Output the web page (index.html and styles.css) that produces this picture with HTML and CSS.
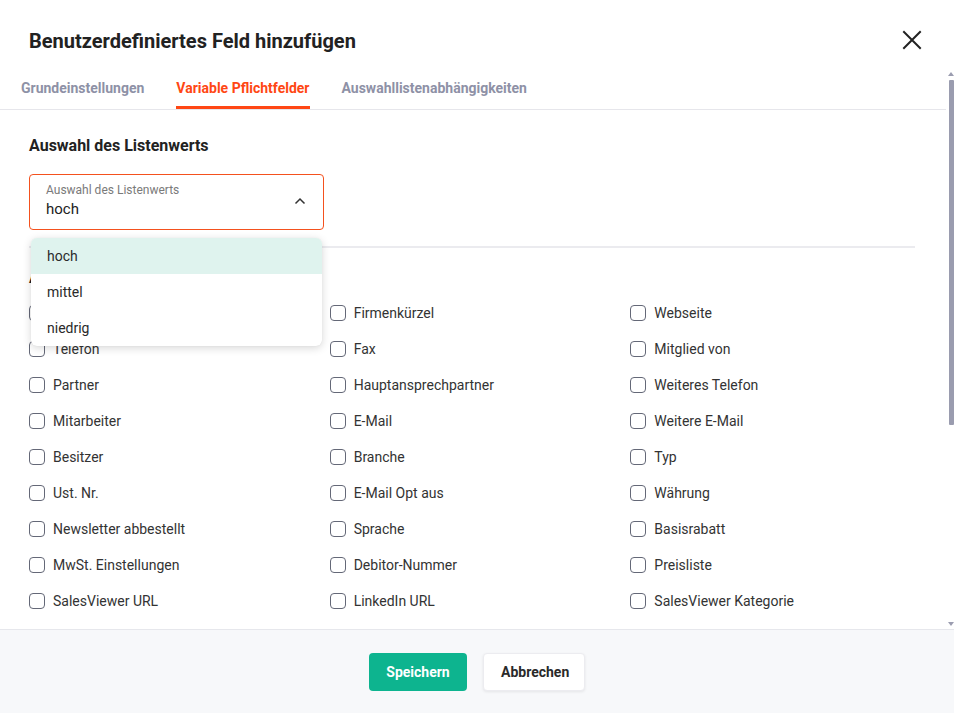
FILE: index.html
```html
<!DOCTYPE html>
<html lang="de">
<head>
<meta charset="utf-8">
<title>Benutzerdefiniertes Feld hinzufügen</title>
<link rel="stylesheet" href="styles.css">
</head>
<body>
<div class="modal">
  <header class="modal-header">
    <h1 class="modal-title">Benutzerdefiniertes Feld hinzufügen</h1>
    <button class="close-btn" aria-label="Schließen">
      <svg width="20" height="20" viewBox="0 0 20 20"><path d="M2 2 L18 18 M18 2 L2 18" stroke="#222" stroke-width="2" stroke-linecap="square" fill="none"/></svg>
    </button>
  </header>
  <div class="modal-body">
    <nav class="tabs">
      <span class="tab">Grundeinstellungen</span>
      <span class="tab active">Variable Pflichtfelder</span>
      <span class="tab">Auswahllistenabhängigkeiten</span>
    </nav>
    <div class="content">
      <h2 class="section-title">Auswahl des Listenwerts</h2>
      <div class="select-wrap">
        <div class="select">
          <div class="select-text">
            <span class="select-label">Auswahl des Listenwerts</span>
            <span class="select-value">hoch</span>
          </div>
          <svg class="chevron" width="12" height="8" viewBox="0 0 12 8"><path d="M1.5 6.5 L6 2 L10.5 6.5" stroke="#333" stroke-width="1.5" fill="none"/></svg>
        </div>
        <ul class="dropdown">
          <li class="option selected">hoch</li>
          <li class="option">mittel</li>
          <li class="option">niedrig</li>
        </ul>
      </div>
      <hr class="divider">
      <h2 class="section-title second">Auswahl der Pflichtfelder</h2>
      <div class="grid">
        <label class="cb"><span class="box"></span>Firmenname</label>
        <label class="cb"><span class="box"></span>Firmenkürzel</label>
        <label class="cb"><span class="box"></span>Webseite</label>
        <label class="cb"><span class="box"></span>Telefon</label>
        <label class="cb"><span class="box"></span>Fax</label>
        <label class="cb"><span class="box"></span>Mitglied von</label>
        <label class="cb"><span class="box"></span>Partner</label>
        <label class="cb"><span class="box"></span>Hauptansprechpartner</label>
        <label class="cb"><span class="box"></span>Weiteres Telefon</label>
        <label class="cb"><span class="box"></span>Mitarbeiter</label>
        <label class="cb"><span class="box"></span>E-Mail</label>
        <label class="cb"><span class="box"></span>Weitere E-Mail</label>
        <label class="cb"><span class="box"></span>Besitzer</label>
        <label class="cb"><span class="box"></span>Branche</label>
        <label class="cb"><span class="box"></span>Typ</label>
        <label class="cb"><span class="box"></span>Ust. Nr.</label>
        <label class="cb"><span class="box"></span>E-Mail Opt aus</label>
        <label class="cb"><span class="box"></span>Währung</label>
        <label class="cb"><span class="box"></span>Newsletter abbestellt</label>
        <label class="cb"><span class="box"></span>Sprache</label>
        <label class="cb"><span class="box"></span>Basisrabatt</label>
        <label class="cb"><span class="box"></span>MwSt. Einstellungen</label>
        <label class="cb"><span class="box"></span>Debitor-Nummer</label>
        <label class="cb"><span class="box"></span>Preisliste</label>
        <label class="cb"><span class="box"></span>SalesViewer URL</label>
        <label class="cb"><span class="box"></span>LinkedIn URL</label>
        <label class="cb"><span class="box"></span>SalesViewer Kategorie</label>
      </div>
    </div>
    <div class="scrollbar">
      <span class="arrow up"></span>
      <span class="thumb"></span>
      <span class="track-rest"></span>
      <span class="arrow down"></span>
    </div>
  </div>
  <footer class="modal-footer">
    <button class="btn btn-primary">Speichern</button>
    <button class="btn btn-secondary">Abbrechen</button>
  </footer>
</div>
</body>
</html>
```
FILE: styles.css
```css
* { box-sizing: border-box; }
html, body { margin: 0; padding: 0; }
body {
  font-family: Roboto, "Noto Sans", "Liberation Sans", sans-serif;
  background: #fff;
  color: #222;
}
.modal {
  width: 954px;
  height: 713px;
  display: flex;
  flex-direction: column;
  overflow: hidden;
}
.modal-header {
  height: 70px;
  flex: none;
  padding: 12px 32px 0 29px;
  display: flex;
  align-items: center;
  justify-content: space-between;
}
.modal-title {
  margin: 0;
  font-size: 20px;
  font-weight: 700;
  color: #222;
}
.close-btn {
  border: 0;
  background: none;
  padding: 0;
  width: 20px;
  height: 20px;
  display: flex;
  margin-top: -2px;
}
.modal-body {
  flex: 1;
  position: relative;
  overflow: hidden;
}
.tabs {
  display: flex;
  gap: 32px;
  padding-left: 21px;
  margin-right: 8px;
  height: 40px;
  border-bottom: 1px solid #e6e6eb;
}
.tab {
  font-size: 14px;
  font-weight: 700;
  color: #8e91a6;
  padding-top: 10px;
  border-bottom: 3px solid transparent;
  height: 39px;
}
.tab.active {
  color: #ff4714;
  border-bottom-color: #ff4714;
}
.content {
  padding: 26px 39px 0 29px;
}
.section-title {
  margin: 0;
  font-size: 16px;
  line-height: 20px;
  font-weight: 700;
  color: #222;
}
.section-title.second {
  margin: 20px 0 7px;
}
.select-wrap {
  position: relative;
  width: 295px;
  margin-top: 18px;
}
.select {
  height: 56px;
  border: 1px solid #f4511e;
  border-radius: 4px;
  padding: 0 17px 0 16px;
  display: flex;
  align-items: center;
  justify-content: space-between;
}
.select-text {
  display: flex;
  flex-direction: column;
  margin-top: -3px;
}
.select-label {
  font-size: 12px;
  line-height: 14px;
  color: #7a7a7a;
}
.select-value {
  font-size: 15px;
  line-height: 20px;
  color: #222;
  margin-top: 2px;
}
.chevron { margin-top: -2px; }
.dropdown {
  position: absolute;
  left: 2px;
  top: 64px;
  width: 291px;
  margin: 0;
  padding: 0;
  list-style: none;
  background: #fff;
  border-radius: 6px;
  box-shadow: 0 2px 8px rgba(0, 0, 0, 0.16), 0 0 1px rgba(0, 0, 0, 0.1);
  overflow: hidden;
  z-index: 5;
}
.option {
  height: 36px;
  line-height: 36px;
  padding-left: 16px;
  font-size: 14px;
  color: #2a2a2a;
}
.option.selected { background: #dff3ee; }
.divider {
  margin: 16px 0 0;
  border: 0;
  border-top: 2px solid #ebebef;
}
.grid {
  display: grid;
  grid-template-columns: repeat(3, 1fr);
  column-gap: 16px;
}
.cb {
  height: 36px;
  display: flex;
  align-items: center;
  gap: 8px;
  font-size: 14px;
  color: #333;
}
.box {
  width: 16px;
  height: 16px;
  flex: none;
  border: 1.5px solid #646877;
  border-radius: 4px;
  background: #fff;
}
.scrollbar {
  position: absolute;
  top: 0;
  right: 0;
  width: 6px;
  height: 100%;
  display: flex;
  flex-direction: column;
  align-items: flex-end;
}
.arrow {
  width: 0;
  height: 0;
  border-left: 3px solid transparent;
  border-right: 3px solid transparent;
  margin: 2px 0;
}
.arrow.up { border-bottom: 4px solid #9b9db0; }
.arrow.down { border-top: 4px solid #9b9db0; margin-bottom: 3px; }
.thumb {
  width: 5px;
  height: 345px;
  margin-top: 2px;
  background: #9a9caf;
  border-radius: 1px;
}
.track-rest { flex: 1; }
.modal-footer {
  height: 84px;
  flex: none;
  border-top: 1px solid #e6e7ec;
  background: #f7f8fa;
  display: flex;
  align-items: center;
  justify-content: center;
  gap: 16px;
}
.btn {
  height: 38px;
  font-family: inherit;
  font-size: 14px;
  font-weight: 700;
  border-radius: 4px;
  padding: 0 17px;
  cursor: pointer;
}
.btn-primary {
  background: #0db48f;
  color: #fff;
  border: 0;
  width: 98px;
}
.btn-secondary {
  background: #fff;
  color: #2a2a2a;
  border: 1px solid #ececf0;
  box-shadow: 0 1px 3px rgba(0, 0, 0, 0.08);
  width: 102px;
}
```
